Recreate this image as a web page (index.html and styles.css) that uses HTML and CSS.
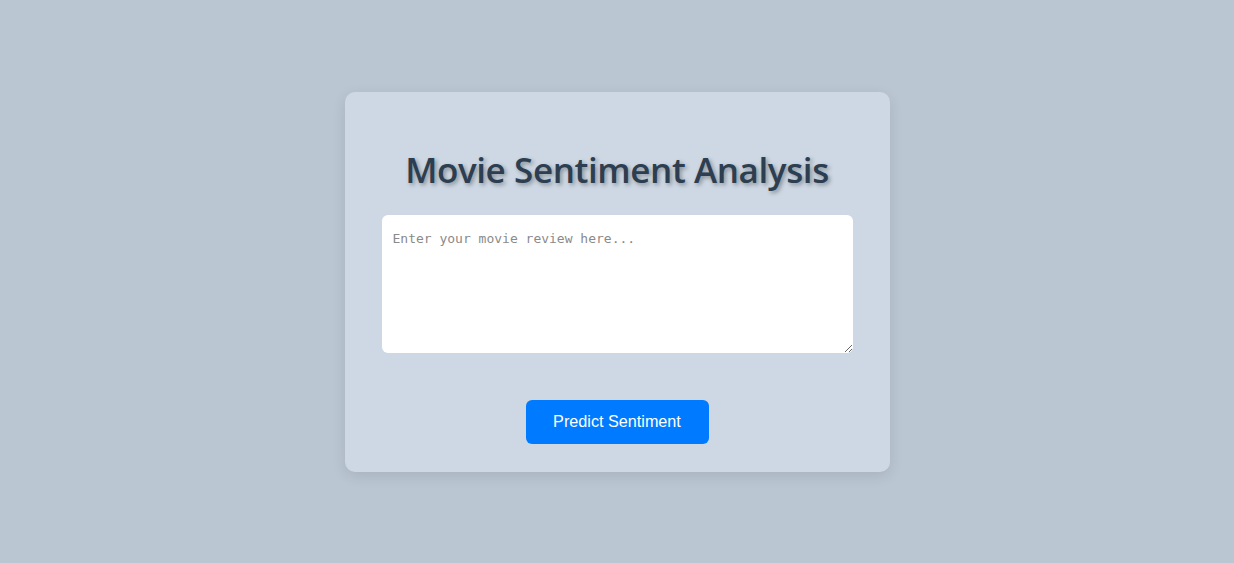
FILE: index.html
```html
<!DOCTYPE html>
<html lang="en">
<head>
<meta charset="utf-8">
<title>Movie Sentiment Analysis</title>
<link rel="stylesheet" href="styles.css">
</head>
<body>
<main class="page">
  <section class="card">
    <h1 class="title">Movie Sentiment Analysis</h1>
    <textarea class="review" placeholder="Enter your movie review here..."></textarea>
    <button class="predict" type="button">Predict Sentiment</button>
  </section>
</main>
</body>
</html>
```

FILE: styles.css
```css
html, body {
  margin: 0;
  padding: 0;
  height: 100%;
}
body {
  background: #bac6d2;
  font-family: "Liberation Sans", Arial, sans-serif;
}
.page {
  height: 100%;
  display: flex;
  align-items: center;
  justify-content: center;
}
.card {
  width: 545px;
  box-sizing: border-box;
  background: #cdd8e4;
  border-radius: 10px;
  box-shadow: 0 4px 14px rgba(0, 0, 0, 0.10);
  padding: 57px 37px 28px;
  display: flex;
  flex-direction: column;
  align-items: center;
}
.title {
  margin: 0 0 24px;
  font-family: "Open Sans", "Noto Sans", sans-serif;
  font-weight: 600;
  font-size: 35px;
  line-height: 1.2;
  color: #2c3e50;
  text-shadow: 2px 2px 4px rgba(0, 0, 0, 0.35);
  letter-spacing: -0.4px;
}
.review {
  width: 100%;
  height: 138px;
  box-sizing: border-box;
  border: none;
  border-radius: 6px;
  background: #ffffff;
  padding: 16px 11px;
  font-family: "DejaVu Sans Mono", "Liberation Mono", monospace;
  font-size: 13px;
  color: #333;
  resize: vertical;
  outline: none;
  margin: 0 0 47px;
}
.review::placeholder {
  color: #8a8a8a;
}
.predict {
  background: #007bff;
  color: #ffffff;
  border: none;
  border-radius: 6px;
  width: 183px;
  height: 44px;
  font-family: "Liberation Sans", Arial, sans-serif;
  font-size: 16.2px;
  cursor: pointer;
}
```
